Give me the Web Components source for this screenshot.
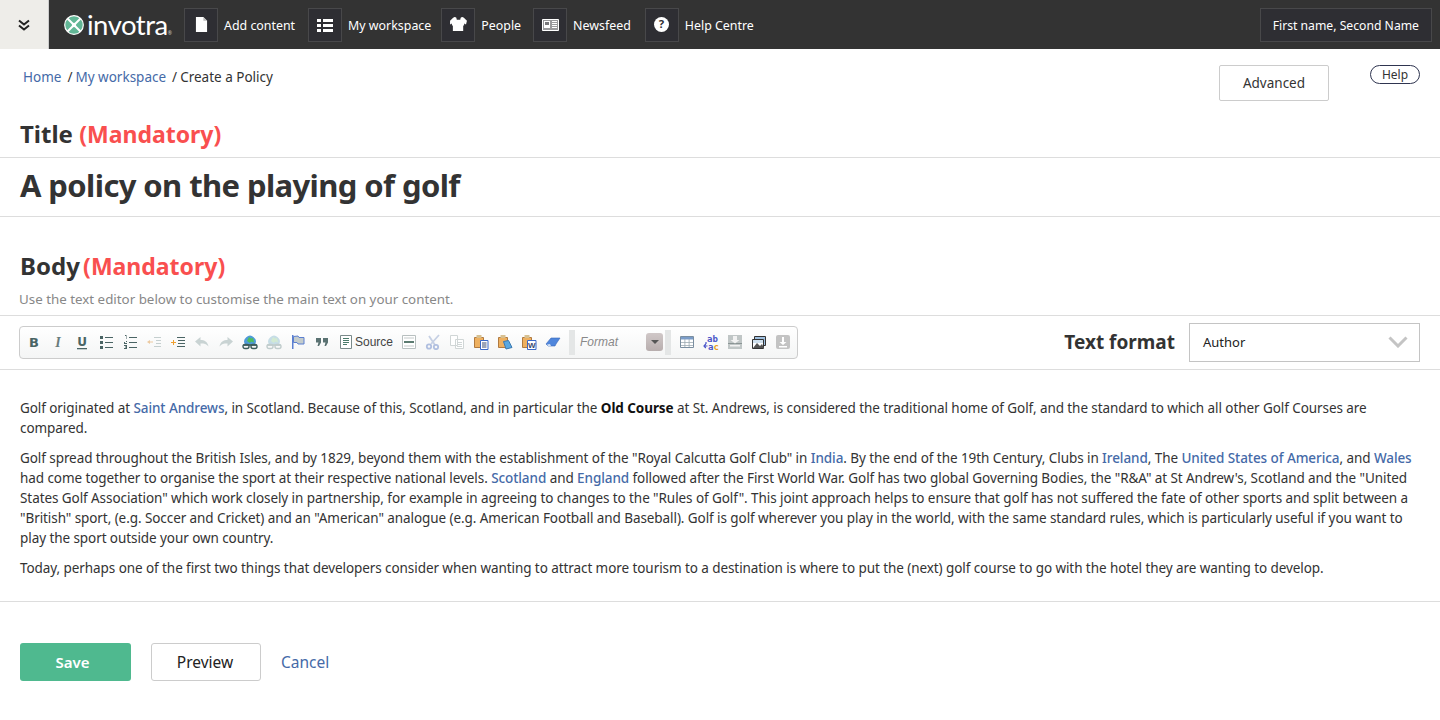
<!DOCTYPE html>
<html lang="en">
<head>
<meta charset="utf-8">
<title>Create a Policy</title>
<style>
  html, body { margin: 0; background: #fff; }
  body { font-family: "Noto Sans", "Open Sans", sans-serif; color: #333; overflow: hidden; height: 720px; }
</style>
</head>
<body>
<app-topbar>
  <nav-item label="Add content" style="margin-right:13px"><svg viewBox="0 0 14 16" width="13" height="15"><path fill="#fff" d="M1 0h8l4 4v12H1z"/><path fill="#bbb" d="M9 0l4 4H9z"/></svg></nav-item>
  <nav-item label="My workspace" style="margin-right:10px"><svg viewBox="0 0 16 14" width="16" height="14"><path fill="#fff" d="M0 1h4v3H0zM6 1h10v3H6zM0 6h4v3H0zM6 6h10v3H6zM0 11h4v3H0zM6 11h10v3H6z"/></svg></nav-item>
  <nav-item label="People"><svg viewBox="0 0 18 16" width="17" height="15"><path fill="#fff" d="M3 1h3l1 2h4l1-2h3l3 3-1 4-2-1v2h-1v6H3V9H2V7L0 8 0 4z"/><circle cx="5" cy="2" r="2" fill="#fff"/><circle cx="13" cy="2" r="2" fill="#fff"/></svg></nav-item>
  <nav-item label="Newsfeed" style="margin-right:14px"><svg viewBox="0 0 17 12" width="17" height="12"><path fill="#9a9a9c" stroke="#fff" d="M.5.5h16v11H.5z"/><path fill="#fff" d="M2 2h6v7H2zM10 2h5v1h-5zM10 4h5v1h-5zM10 6h5v1h-5zM10 8h5v1h-5z"/><path fill="#77777a" d="M3 3h4v3H3z"/></svg></nav-item>
  <nav-item label="Help Centre"><svg viewBox="0 0 16 16" width="15" height="15"><circle cx="8" cy="8" r="8" fill="#fff"/><text x="8" y="12.200" text-anchor="middle" font-family="Noto Sans, sans-serif" font-weight="700" font-size="12" fill="#2e2e32">?</text></svg></nav-item>
</app-topbar>

<page-head></page-head>

<field-label style="height:38px;padding-top:2px">Title</field-label>
<title-field>A policy on the playing of golf</title-field>

<field-label style="height:36px;padding-top:34px;--em-shift:-3px">Body</field-label>
<hint-text>Use the text editor below to customise the main text on your content.</hint-text>

<editor-bar></editor-bar>

<rich-text>
  <p>Golf originated at <a>Saint Andrews</a>, in Scotland. Because of this, Scotland, and in particular the <b>Old Course</b> at St. Andrews, is considered the traditional home of Golf, and the standard to which all other Golf Courses are compared.</p>
  <p>Golf spread throughout the British Isles, and by 1829, beyond them with the establishment of the "Royal Calcutta Golf Club" in <a>India</a>. By the end of the 19th Century, Clubs in <a>Ireland</a>, The <a>United States of America</a>, and <a>Wales</a> had come together to organise the sport at their respective national levels. <a>Scotland</a> and <a>England</a> followed after the First World War. Golf has two global Governing Bodies, the "R&amp;A" at St Andrew's, Scotland and the "United States Golf Association" which work closely in partnership, for example in agreeing to changes to the "Rules of Golf". This joint approach helps to ensure that golf has not suffered the fate of other sports and split between a "British" sport, (e.g. Soccer and Cricket) and an "American" analogue (e.g. American Football and Baseball). Golf is golf wherever you play in the world, with the same standard rules, which is particularly useful if you want to play the sport outside your own country.</p>
  <p>Today, perhaps one of the first two things that developers consider when wanting to attract more tourism to a destination is where to put the (next) golf course to go with the hotel they are wanting to develop.</p>
</rich-text>

<form-actions></form-actions>

<script>
function shadow(el, html) {
  el.attachShadow({ mode: 'open' }).innerHTML = html;
}

class AppTopbar extends HTMLElement {
  connectedCallback() {
    shadow(this, `
      <style>
        :host { display: flex; align-items: center; height: 49px; background: #333; color: #fff; font-size: 12.4px; }
        .toggle { width: 49px; height: 49px; background: #eeede9; display: flex; align-items: center; justify-content: center; border-right: 1px solid #ccc; box-sizing: border-box; }
        .logo { display: flex; align-items: center; width: 120px; margin-left: 15px; }
        .word { font: 400 27.500px/1 Lato, sans-serif; letter-spacing: -.5px; margin-left: 3px; }
        .reg { font-size: 5px; align-self: flex-end; margin: 0 0 2px 0; color: #ccc; }
        .links { display: flex; flex: 1; }
        .user { margin-right: 8px; height: 34px; box-sizing: border-box; border: 1px solid #48484a; background: #2e2e33; padding: 2px 12px 0; display: flex; align-items: center; font-size: 12.2px; }
      </style>
      <div class="toggle"><svg viewBox="0 0 12 12" width="12" height="12"><path fill="none" stroke="#222" stroke-width="2" d="M1 1.500l5 4 5-4M1 6.500l5 4 5-4"/></svg></div>
      <div class="logo">
        <svg viewBox="0 0 20 20" width="20" height="20"><circle cx="10" cy="10" r="9.300" fill="#62b796" stroke="#fff" stroke-width="1.200"/><path fill="none" stroke="#fff" stroke-width="2" d="M3.500 3.500C7 7 13 13 16.500 16.500M16.500 3.500C13 7 7 13 3.500 16.500"/><circle cx="10" cy="10" r="2.200" fill="#fff"/></svg>
        <span class="word">invotra</span><span class="reg">®</span>
      </div>
      <div class="links"><slot></slot></div>
      <div class="user">First name, Second Name</div>
    `);
  }
}

class NavItem extends HTMLElement {
  connectedCallback() {
    shadow(this, `
      <style>
        :host { display: flex; align-items: center; margin-right: 12px; }
        .box { width: 34px; height: 34px; box-sizing: border-box; border: 1px solid #48484a; background: #2e2e33; display: flex; align-items: center; justify-content: center; margin-right: 6px; }
        span { margin-top: 2px; }
        ::slotted(svg) { display: block; }
      </style>
      <div class="box"><slot></slot></div>
      <span>${this.getAttribute('label')}</span>
    `);
  }
}

class PageHead extends HTMLElement {
  connectedCallback() {
    shadow(this, `
      <style>
        :host { display: flex; height: 68px; font-size: 13.500px; box-sizing: border-box; padding: 16px 20px 0 23px; }
        .crumbs { flex: 1; line-height: 24px; }
        a { color: #456aa8; }
        i { font-style: normal; margin: 0 3px 0 6px; }
        .adv { width: 110px; height: 36px; box-sizing: border-box; border: 1px solid #ccc; border-radius: 2px; display: flex; align-items: center; justify-content: center; margin-right: 41px; padding-bottom: 1px; }
        .help { width: 50px; height: 19px; box-sizing: border-box; border: 1px solid #2f3550; border-radius: 10px; display: flex; align-items: center; justify-content: center; font-size: 12px; }
      </style>
      <div class="crumbs"><a>Home</a><i>/</i><a>My workspace</a><i>/</i>Create a Policy</div>
      <div class="adv">Advanced</div>
      <div class="help">Help</div>
    `);
  }
}

class FieldLabel extends HTMLElement {
  connectedCallback() {
    shadow(this, `
      <style>
        :host { display: block; padding-left: 20px; font-size: 24px; font-weight: 700; line-height: 30px; color: #333; }
        em { font-style: normal; font-size: 23px; color: #f94f4f; margin-left: var(--em-shift, 0); }
      </style>
      <slot></slot> <em>(Mandatory)</em>
    `);
  }
}

class TitleField extends HTMLElement {
  connectedCallback() {
    shadow(this, `
      <style>
        :host { display: block; height: 58px; border-top: 1px solid #ddd; border-bottom: 1px solid #ddd; padding-left: 20px; font-size: 31px; letter-spacing: -.6px; font-weight: 700; line-height: 54px; color: #333; }
      </style>
      <slot></slot>
    `);
  }
}

class HintText extends HTMLElement {
  connectedCallback() {
    shadow(this, `
      <style>
        :host { display: block; padding-left: 19px; height: 24px; margin-top: 4px; font-size: 13.350px; line-height: 16px; color: #888; }
      </style>
      <slot></slot>
    `);
  }
}

const ink = '#4a6464', faint = '#c5cfcf';
const globe = (a, b, c) => `<path fill="${a}" d="M3 10.500A5.800 5.800 0 1 1 13 10.500z"/><path fill="${b}" d="M5 7l2-4 2 1.500 2-.5 1 4.500-3-1-1 1.500z"/><path fill="none" stroke="${c}" stroke-width="1.800" d="M1.500 11h13"/><rect x="1" y="10.500" width="6" height="4" rx="2" fill="none" stroke="${c}" stroke-width="1.400"/><rect x="9" y="10.500" width="6" height="4" rx="2" fill="none" stroke="${c}" stroke-width="1.400"/>`;
const board = inner => `<path fill="#eeb060" stroke="#b07a40" d="M1.500 3.500h9v10h-9z"/><path fill="#d8c090" d="M3.500 1h5v3h-5z"/>${inner}`;
const TOOLS = [
  '<text x="8" y="13" text-anchor="middle" font-family="DejaVu Sans, sans-serif" font-weight="700" font-size="13" fill="' + ink + '">B</text>',
  '<text x="8" y="13" text-anchor="middle" font-family="Liberation Serif, serif" font-weight="700" font-style="italic" font-size="14" fill="#6a7c7c">I</text>',
  '<text x="8" y="12" text-anchor="middle" font-family="DejaVu Sans, sans-serif" font-weight="700" font-size="12" fill="' + ink + '">U</text><path fill="' + ink + '" d="M3 14h10v1.300H3z"/>',
  '<path fill="' + ink + '" d="M2 2h3v3H2zM2 7h3v3H2zM2 12h3v3H2zM7 3h8v1H7zM7 8h8v1H7zM7 13h8v1H7z"/>',
  '<path fill="' + ink + '" d="M7 3h8v1H7zM7 8h8v1H7zM7 13h8v1H7zM3 1h1.500v4H4V2H3zM2 7h3v1H3v1h2v1H2V8h2V7zM2 11h3v4H2v-1h2v-.5H3v-1h1V12H2z"/>',
  '<path fill="#ecc9a0" d="M1 8l3-2v1.500h3v1H4V10z"/><path fill="' + faint + '" d="M8 3h7v1H8zM10 6h5v1h-5zM10 9h5v1h-5zM8 12h7v1H8z"/>',
  '<path fill="#f0a030" d="M4 6v2h2v1H4v2H3V9H1V8h2V6z"/><path fill="' + ink + '" d="M7 3h8v1H7zM8 6h7v1H8zM8 9h7v1H8zM7 12h8v1H7z"/>',
  '<path fill="#c9d3d3" d="M1 7.500l5.500-4.500v3c4 0 7 1.500 8 6.500-2-2.500-4-3-8-3v3z"/>',
  '<path fill="#c9d3d3" d="M15 7.500l-5.500-4.500v3c-4 0-7 1.500-8 6.500 2-2.500 4-3 8-3v3z"/>',
  globe('#4f9bd8', '#4fbf5a', '#3c5c5c'),
  globe('#c6dde6', '#d2ead2', '#c0cccc'),
  '<path fill="#5b7fd0" d="M2 1h1.500v14H2z"/><path fill="#c4cccc" stroke="#5b7fd0" stroke-width="1" d="M3.500 2.500L8 2l1 1.500h5V10H8L7 8.500H3.500z"/>',
  '<path fill="#5a7272" d="M2 4h5v4.500L5 12H3.500l1-3.500H2zM9 4h5v4.500L12 12h-1.500l1-3.500H9z"/>',
  '<path fill="#fff" stroke="#7a8a8a" d="M2.500 1.500h11v13h-11z"/><path fill="#4a7a6a" d="M5 4h6v1H5zM5 6h6v1H5zM5 8h6v1H5zM5 10h4v1H5z"/>',
  null,
  '<path fill="#fff" stroke="#b8c0c0" d="M1.500 1.500h13v13h-13z"/><path fill="#c5cccc" d="M3 3.500h10v1H3zM3 11.500h10v1H3z"/><path fill="#5b7b70" d="M3 7h10v2H3z"/>',
  '<path fill="none" stroke="#c6d0e4" stroke-width="1.800" d="M14 1L6 10M4 2c2 3 4 6 6 9"/><circle cx="4" cy="12.500" r="2.200" fill="none" stroke="#b0bfe0" stroke-width="1.800"/><circle cx="11" cy="13" r="2.200" fill="none" stroke="#b0bfe0" stroke-width="1.800"/>',
  '<path fill="#fff" stroke="#d0d6d6" d="M1.500 1.500h7v10h-7zM6.500 5.500h8v9h-8z"/><path fill="#d0d6d6" d="M8 8h5v1H8zM8 10h5v1H8zM8 12h5v1H8z"/>',
  board('<path fill="#fff" stroke="#3a68c8" d="M7.500 6.500h7.500v9H7.500z"/><path fill="#3a4a70" d="M9 8.500h4.500v1H9zM9 10.500h4.500v1H9zM9 12.500h4.500v1H9z"/>'),
  board('<path fill="#5aa8e0" stroke="#3a78b0" d="M6.500 7.500l5-1 3.500 7-6 1.500z"/>'),
  board('<path fill="#fff" stroke="#3a68c8" d="M6.500 6.500h8.500v9H6.500z"/><text x="10.700" y="14" text-anchor="middle" font-family="Liberation Sans, sans-serif" font-weight="700" font-size="8" fill="#3a4a70">W</text>'),
  '<path fill="#4f86dc" stroke="#3a68b8" stroke-width=".6" d="M1 10l5-6h9l-4 6-1 2H3z"/><path fill="#cfe0f5" d="M2 10.500l3-.5 1 2H3z"/>'
];
const AFTER = [
  '<path fill="#fff" stroke="#7a8ea0" d="M1.500 2.500h13v11h-13z"/><path fill="#7a9cc8" d="M2 3h12v2.500H2z"/><path fill="#9aa8b0" d="M2 8h12v.8H2zM2 11h12v.8H2zM5.500 5h.8v8h-.8zM9.700 5h.8v8h-.8z"/>',
  '<g font-family="DejaVu Sans Mono, monospace" font-size="9" font-weight="700"><text x="4" y="7.500" fill="#4a55c8">ab</text><text x="5" y="15.500" fill="#4a55c8">a</text><text x="10.400" y="15.500" fill="#e8a020">c</text></g><path fill="none" stroke="#4a55c8" stroke-width="1.200" d="M4.500 12H1M2.800 10L1 12l1.800 2M3 10V8"/>',
  '<path fill="#c0c6c6" d="M1 1h14v14H1z"/><path fill="#8a9494" d="M1 9h14v1H1z"/><path fill="#f2f2f2" d="M6 2h4v4h2.500L8 9.500 3.500 6H6zM3 11h10v1.500H3z"/>',
  '<path fill="#9fc0e0" stroke="#333" d="M3.500 2.500h11v9h-11z"/><path fill="#fff" stroke="#333" d="M1.500 5.500h11v9h-11z"/><path fill="#cfe0ee" d="M2 6h10v3H2z"/><path fill="#555" d="M2 14l4-5 3 3 2-2 2 4z"/>',
  '<rect x="1" y="1" width="14" height="14" rx="2" fill="#c3c3c3"/><path fill="#fff" d="M7 3h2v5h2.500L8 11 4.500 8H7zM4 12h8v1.500H4z"/>'
];

function toolHtml(paths) {
  return `<span class="tool"><svg viewBox="0 0 16 16" width="16" height="16">${paths}</svg></span>`;
}

class EditorBar extends HTMLElement {
  connectedCallback() {
    const tools = TOOLS.map(t => t ? toolHtml(t) : '<span class="src">Source</span>').join('');
    shadow(this, `
      <style>
        :host { display: flex; align-items: center; height: 55px; box-sizing: border-box; border-top: 1px solid #ddd; border-bottom: 1px solid #ddd; padding: 0 20px 1px 19px; }
        .bar { display: flex; align-items: center; width: 779px; height: 33px; box-sizing: border-box; border: 1px solid #ccc; border-radius: 4px; padding: 3px 2px; background: linear-gradient(#fff, #f4f5f5); }
        .tool { width: 24px; height: 24px; display: flex; align-items: center; justify-content: center; flex: none; }
        .src { font: 12px "Liberation Sans", sans-serif; color: #444; margin: 0 2px 0 -3px; width: 42px; }
        .sep { width: 6px; height: 25px; background: #e4e6e6; flex: none; margin: 0 0 0 4px; }
        .combo { width: 90px; height: 24px; display: flex; align-items: center; font: italic 12px "Liberation Sans", sans-serif; color: #888; box-sizing: border-box; padding-left: 5px; flex: none; }
        .combo span { flex: 1; }
        .combo i { width: 17px; height: 18px; border-radius: 3px; background: linear-gradient(#d0c8c8, #b8aeae); display: flex; align-items: center; justify-content: center; margin-right: 2px; }
        .combo i::after { content: ""; border: 4px solid transparent; border-top-color: #555; border-bottom: 0; }
        .spacer { flex: 1; }
        label { font-size: 19px; font-weight: 700; margin-right: 14px; color: #333; }
        .select { width: 231px; height: 39px; box-sizing: border-box; border: 1px solid #c4c4c4; display: flex; align-items: center; justify-content: space-between; padding: 0 11px 0 13px; font-size: 13px; color: #222; }
      </style>
      <div class="bar">
        ${tools}
        <span class="sep"></span>
        <span class="combo"><span>Format</span><i></i></span>
        <span class="sep" style="margin:0 4px 0 0"></span>
        ${AFTER.map(toolHtml).join('')}
      </div>
      <span class="spacer"></span>
      <label>Text format</label>
      <div class="select">Author<svg viewBox="0 0 20 12" width="20" height="12"><path fill="none" stroke="#c4c4c4" stroke-width="3" d="M1.500 1.500L10 10l8.500-8.500"/></svg></div>
    `);
  }
}

class RichText extends HTMLElement {
  connectedCallback() {
    shadow(this, `
      <style>
        :host { display: block; height: 232px; box-sizing: border-box; padding: 28px 20px 0; border-bottom: 1px solid #ddd; font-size: 13.500px; letter-spacing: -.075px; line-height: 20px; color: #333; }
        ::slotted(p) { margin: 0 0 10px; }
      </style>
      <slot></slot>
    `);
    this.querySelectorAll('a').forEach(a => { a.style.color = '#456aa8'; a.style.fontWeight = '500'; });
    this.querySelectorAll('b').forEach(b => { b.style.color = '#111'; });
  }
}

class FormActions extends HTMLElement {
  connectedCallback() {
    shadow(this, `
      <style>
        :host { display: flex; align-items: center; gap: 20px; padding: 41px 0 0 20px; font-size: 15.500px; }
        div { width: 111px; height: 38px; box-sizing: border-box; border-radius: 3px; display: flex; align-items: center; justify-content: center; }
        .save { background: #4fb98f; color: #fff; font-weight: 600; font-size: 15px; padding-right: 6px; }
        .preview { width: 110px; border: 1px solid #ccc; color: #222; padding-right: 2px; }
        a { color: #456aa8; }
      </style>
      <div class="save">Save</div>
      <div class="preview">Preview</div>
      <a>Cancel</a>
    `);
  }
}

customElements.define('app-topbar', AppTopbar);
customElements.define('nav-item', NavItem);
customElements.define('page-head', PageHead);
customElements.define('field-label', FieldLabel);
customElements.define('title-field', TitleField);
customElements.define('hint-text', HintText);
customElements.define('editor-bar', EditorBar);
customElements.define('rich-text', RichText);
customElements.define('form-actions', FormActions);
</script>
</body>
</html>
